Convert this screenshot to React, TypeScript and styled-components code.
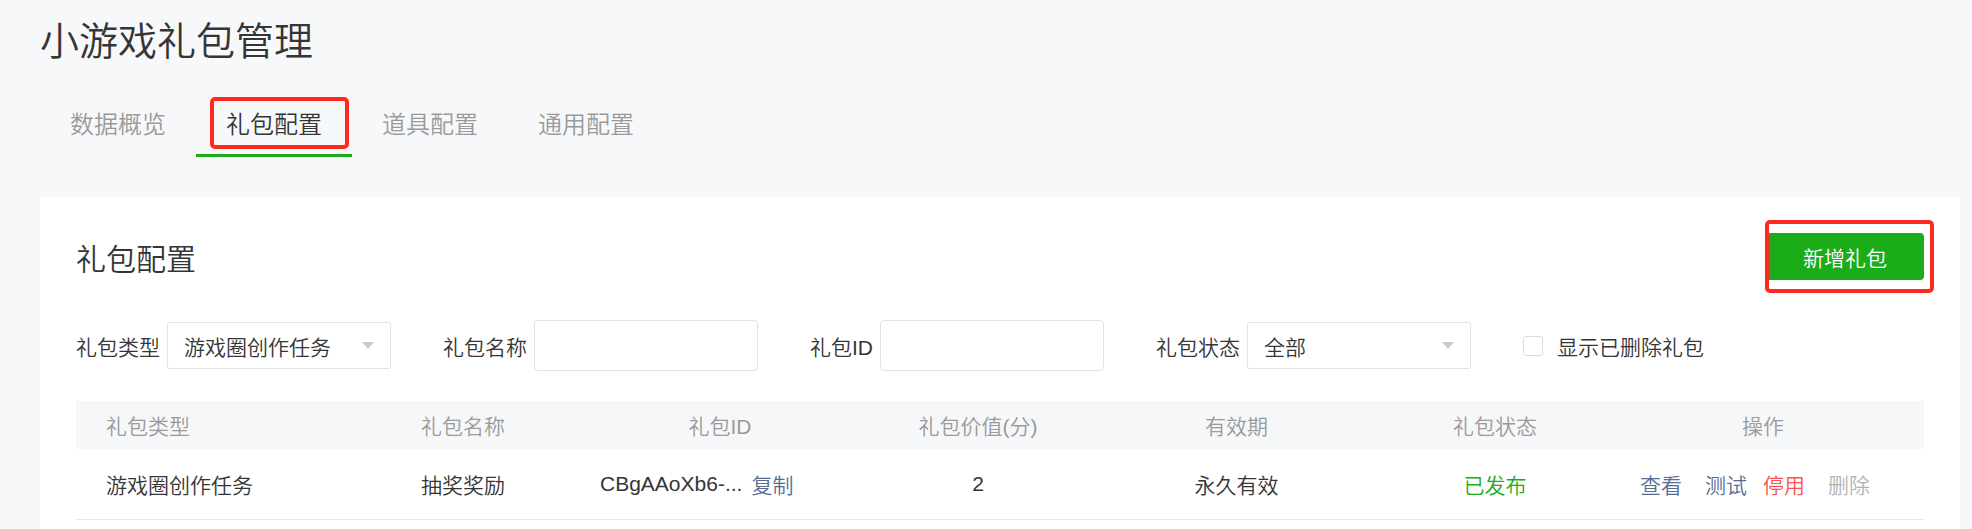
import React from 'react';
import styled, { createGlobalStyle } from 'styled-components';

const GlobalStyle = createGlobalStyle`
    html, body {
        margin: 0;
        padding: 0;
        background: #f7f8fa;
    }
    body {
        font-family: "Liberation Sans", "Noto Sans CJK SC", sans-serif;
        font-weight: 350;
        color: #353535;
    }
`

const Page = styled.div`
    padding: 14px 0 0 40px;
    width: 1920px;
`

const Title = styled.h1`
    margin: 0;
    font-size: 39px;
    line-height: 55px;
    font-weight: 350;
    color: #353535;
`

const Tabs = styled.div`
    display: flex;
    margin-top: 26px;
`

const Tab = styled.div<{ $active?: boolean }>`
    position: relative;
    padding: 0 30px;
    height: 59px;
    line-height: 59px;
    font-size: 24px;
    color: ${p => p.$active ? '#353535' : '#9a9a9a'};
    border-bottom: 3px solid ${p => p.$active ? '#1aad19' : 'transparent'};
`

const Callout = styled.span<{ $inset: string }>`
    position: absolute;
    inset: ${p => p.$inset};
    border: 4px solid #ff2a1f;
    border-radius: 5px;
    pointer-events: none;
`

const Card = styled.div`
    margin-top: 40px;
    background: #fff;
    padding: 36px 36px 40px;
`

const CardHead = styled.div`
    display: flex;
    align-items: center;
    justify-content: space-between;
    height: 47px;
`

const CardTitle = styled.h2`
    margin: 0;
    font-size: 30px;
    font-weight: 350;
    color: #353535;
`

const ButtonWrap = styled.div`
    position: relative;
`

const PrimaryButton = styled.button`
    width: 158px;
    height: 47px;
    border: 0;
    border-radius: 4px;
    background: #1aad19;
    color: #fff;
    font-family: inherit;
    font-weight: 350;
    font-size: 21px;
`

const Filters = styled.div`
    display: flex;
    align-items: center;
    gap: 52px;
    margin-top: 40px;
    height: 51px;
`

const Field = styled.div`
    display: flex;
    align-items: center;
`

const Label = styled.span`
    font-size: 21px;
    margin-right: 7px;
    color: #353535;
`

const Select = styled.div`
    box-sizing: border-box;
    width: 224px;
    height: 47px;
    display: flex;
    align-items: center;
    justify-content: space-between;
    padding: 0 16px;
    border: 1px solid #e4e4e4;
    border-radius: 2px;
    font-size: 21px;
    color: #353535;
`

const Caret = styled.span`
    width: 0;
    height: 0;
    border-left: 6px solid transparent;
    border-right: 6px solid transparent;
    border-top: 7px solid #c9c9c9;
`

const Input = styled.div`
    box-sizing: border-box;
    width: 224px;
    height: 51px;
    border: 1px solid #e2e2e2;
    border-radius: 4px;
`

const Check = styled.span`
    box-sizing: border-box;
    width: 20px;
    height: 20px;
    border: 1px solid #dcdcdc;
    border-radius: 3px;
    margin-right: 14px;
`

const CheckText = styled.span`
    font-size: 21px;
    color: #353535;
`

const Table = styled.div`
    margin-top: 30px;
`

const COLUMNS = '315px 200px 258px 258px 259px 258px 300px'

const HeadRow = styled.div`
    display: grid;
    grid-template-columns: ${COLUMNS};
    height: 48px;
    background: #f6f7f9;
    color: #9a9a9a;
    font-size: 21px;
`

const BodyRow = styled.div`
    display: grid;
    grid-template-columns: ${COLUMNS};
    height: 70px;
    border-bottom: 1px solid #e6e6e6;
    color: #353535;
    font-size: 21px;
`

const Cell = styled.div<{ $align?: 'left' | 'center'; $pl?: number; $pr?: number }>`
    display: flex;
    align-items: center;
    justify-content: ${p => p.$align === 'center' ? 'center' : 'flex-start'};
    padding-left: ${p => p.$pl ?? 0}px;
    padding-right: ${p => p.$pr ?? 0}px;
    white-space: nowrap;
`

const Link = styled.span<{ $tone?: 'blue' | 'red' | 'grey'; $gap?: number }>`
    margin-left: ${p => p.$gap ?? 0}px;
    color: ${p => p.$tone === 'red' ? '#fa5151' : p.$tone === 'grey' ? '#b2b2b2' : '#576b95'};
`

const Status = styled.span`
    color: #1aad19;
`

export default function App() {
    return <Page>
        <GlobalStyle />
        <Title>小游戏礼包管理</Title>
        <Tabs>
            <Tab>数据概览</Tab>
            <Tab $active>
                礼包配置
                <Callout $inset="2px 3px 5px 14px" />
            </Tab>
            <Tab>道具配置</Tab>
            <Tab>通用配置</Tab>
        </Tabs>
        <Card>
            <CardHead>
                <CardTitle>礼包配置</CardTitle>
                <ButtonWrap>
                    <PrimaryButton>新增礼包</PrimaryButton>
                    <Callout $inset="-13px -10px -13px -1px" />
                </ButtonWrap>
            </CardHead>
            <Filters>
                <Field>
                    <Label>礼包类型</Label>
                    <Select>游戏圈创作任务<Caret /></Select>
                </Field>
                <Field>
                    <Label>礼包名称</Label>
                    <Input />
                </Field>
                <Field>
                    <Label>礼包ID</Label>
                    <Input />
                </Field>
                <Field>
                    <Label>礼包状态</Label>
                    <Select>全部<Caret /></Select>
                </Field>
                <Field>
                    <Check />
                    <CheckText>显示已删除礼包</CheckText>
                </Field>
            </Filters>
            <Table>
                <HeadRow>
                    <Cell $pl={30}>礼包类型</Cell>
                    <Cell $pl={30}>礼包名称</Cell>
                    <Cell $align="center">礼包ID</Cell>
                    <Cell $align="center">礼包价值(分)</Cell>
                    <Cell $align="center">有效期</Cell>
                    <Cell $align="center">礼包状态</Cell>
                    <Cell $align="center" $pr={22}>操作</Cell>
                </HeadRow>
                <BodyRow>
                    <Cell $pl={30}>游戏圈创作任务</Cell>
                    <Cell $pl={30}>抽奖奖励</Cell>
                    <Cell $pl={9}>CBgAAoXb6-...<Link $gap={9}>复制</Link></Cell>
                    <Cell $align="center">2</Cell>
                    <Cell $align="center">永久有效</Cell>
                    <Cell $align="center"><Status>已发布</Status></Cell>
                    <Cell $pl={16}>
                        <Link>查看</Link>
                        <Link $gap={23}>测试</Link>
                        <Link $tone="red" $gap={16}>停用</Link>
                        <Link $tone="grey" $gap={23}>删除</Link>
                    </Cell>
                </BodyRow>
            </Table>
        </Card>
    </Page>
}
